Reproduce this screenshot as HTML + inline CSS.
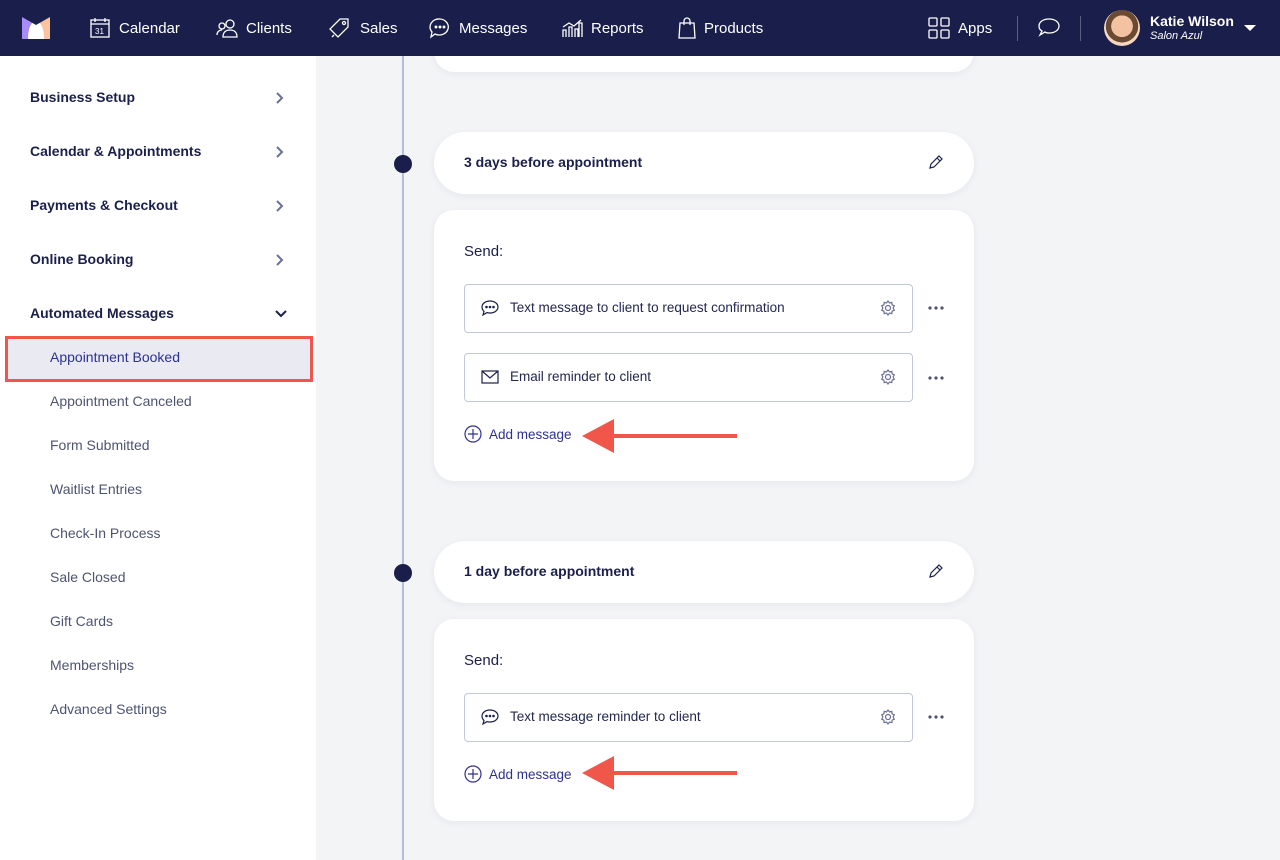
<!DOCTYPE html>
<html><head><meta charset="utf-8"><style>
*{box-sizing:border-box;margin:0;padding:0}
body{width:1280px;height:860px;overflow:hidden;font-family:"Liberation Sans",sans-serif;background:#f3f4f6;position:relative;color:#1b1f4b}
.top{position:absolute;left:0;top:0;width:1280px;height:56px;background:#1a1e4b;color:#fff;z-index:10}
.nav{position:absolute;top:0;height:56px;display:flex;align-items:center;font-size:15px;color:#fff}
.nav svg{margin-right:8px}
.side{position:absolute;left:0;top:56px;width:316px;height:804px;background:#fff}
.sh{position:absolute;left:30px;font-size:14px;font-weight:bold;color:#1b1f4b}
.chev{position:absolute;left:274px}
.si{position:absolute;left:50px;font-size:14px;color:#4e5470}
.line{position:absolute;left:402px;top:56px;width:2px;height:804px;background:#b2bdd9}
.dot{position:absolute;left:394px;width:18px;height:18px;border-radius:50%;background:#1a1e4b}
.card{position:absolute;left:434px;width:540px;background:#fff;border-radius:20px;box-shadow:0 2px 8px rgba(20,30,80,.06)}
.pill{border-radius:31px;height:62px}
.pill b{position:absolute;left:30px;top:22px;font-size:14px}
.pill svg{position:absolute;right:30px;top:22px}
.send{position:absolute;left:30px;font-size:15px}
.msg{position:absolute;left:30px;width:449px;height:49px;border:1px solid #c3c8d8;border-radius:4px;font-size:13.5px;color:#23284f}
.msg span{position:absolute;left:45px;top:15px}
.msg .ic{position:absolute;left:16px;top:15px}
.msg .gear{position:absolute;right:16px;top:15px}
.dots{position:absolute;left:494px}
.add{position:absolute;left:30px;font-size:13.5px;color:#2e3192;display:flex;align-items:center}
.add svg{margin-right:7px}
</style></head><body>
<div class="top">
<svg style="position:absolute;left:22px;top:17px" width="28" height="22" viewBox="0 0 28 22"><rect x="0" y="0" width="14" height="22" fill="#a78bfa"/><rect x="14" y="0" width="14" height="22" fill="#fcc3a0"/><path d="M6 22 Q6 6 14 4 Q22 6 22 22Z" fill="#fff"/><path d="M0 0 L14 8 L28 0Z" fill="#1a1e4b"/></svg>
<div class="nav" style="left:89px"><svg width="22" height="22" viewBox="0 0 22 22" fill="none" stroke="#fff" stroke-width="1.3"><rect x="2" y="3" width="18" height="17"/><path d="M2 7h18M6 1v4M16 1v4"/><text x="6" y="17" font-size="8" fill="#fff" stroke="none">31</text></svg>Calendar</div>
<div class="nav" style="left:216px"><svg width="22" height="22" viewBox="0 0 22 22" fill="none" stroke="#fff" stroke-width="1.3"><circle cx="14" cy="7" r="4"/><path d="M7 20c0-5 3-7 7-7s7 2 7 7z"/><circle cx="6" cy="9" r="3"/><path d="M1 18c0-3 2-5 5-5"/></svg>Clients</div>
<div class="nav" style="left:328px"><svg width="24" height="22" viewBox="0 0 24 22" fill="none" stroke="#fff" stroke-width="1.3"><path d="M12 2h8v8L10 20 2 12z"/><circle cx="16" cy="6" r="1.5"/><path d="M6 18l-2 2"/></svg>Sales</div>
<div class="nav" style="left:429px"><svg width="22" height="22" viewBox="0 0 22 22" fill="none" stroke="#fff" stroke-width="1.3"><path d="M11 2a9 8 0 1 1-5 15l-4 3 1-5A9 8 0 0 1 11 2z"/><circle cx="7" cy="10" r=".8" fill="#fff"/><circle cx="11" cy="10" r=".8" fill="#fff"/><circle cx="15" cy="10" r=".8" fill="#fff"/></svg>Messages</div>
<div class="nav" style="left:561px"><svg width="22" height="22" viewBox="0 0 22 22" fill="none" stroke="#fff" stroke-width="1.3"><path d="M2 20V13h3v7M8 20V10h3v10M14 20V12h3v8M18 20V6h3v14M2 10l6-4 5 3 7-6"/></svg>Reports</div>
<div class="nav" style="left:678px"><svg width="18" height="22" viewBox="0 0 18 22" fill="none" stroke="#fff" stroke-width="1.3"><path d="M2 6h14l1 15H1z"/><path d="M6 8V4a3 3 0 0 1 6 0v4"/></svg>Products</div>
<div class="nav" style="left:928px"><svg width="22" height="22" viewBox="0 0 22 22" fill="none" stroke="#fff" stroke-width="1.3"><rect x="1" y="1" width="8" height="8" rx="1"/><rect x="13" y="1" width="8" height="8" rx="1"/><rect x="1" y="13" width="8" height="8" rx="1"/><rect x="13" y="13" width="8" height="8" rx="1"/></svg>Apps</div>
<div style="position:absolute;left:1017px;top:16px;width:1px;height:25px;background:#5a5e82"></div>
<svg style="position:absolute;left:1037px;top:17px" width="24" height="22" viewBox="0 0 24 22" fill="none" stroke="#fff" stroke-width="1.3"><path d="M12 2c6 0 10 3 10 7s-4 7-10 7c-2 0-3 0-4-1l-5 3 2-4c-2-1-3-3-3-5 0-4 4-7 10-7z"/></svg>
<div style="position:absolute;left:1080px;top:16px;width:1px;height:25px;background:#5a5e82"></div>
<div style="position:absolute;left:1104px;top:10px;width:36px;height:36px;border-radius:50%;background:radial-gradient(circle at 50% 45%,#f3c2a0 0 40%,#6b4a33 41% 60%,#f6d6c0 61%)"></div>
<div style="position:absolute;left:1150px;top:13px;font-size:14px;font-weight:bold">Katie Wilson</div>
<div style="position:absolute;left:1150px;top:30px;font-size:11px;font-style:italic">Salon Azul</div>
<div style="position:absolute;left:1244px;top:25px;border-left:6px solid transparent;border-right:6px solid transparent;border-top:6px solid #fff"></div>
</div>
<div class="side">
<div class="sh" style="top:33px">Business Setup</div>
<div class="sh" style="top:87px">Calendar &amp; Appointments</div>
<div class="sh" style="top:141px">Payments &amp; Checkout</div>
<div class="sh" style="top:195px">Online Booking</div>
<div class="sh" style="top:249px">Automated Messages</div>
<svg class="chev" style="top:35px" width="12" height="14" viewBox="0 0 12 14" fill="none" stroke="#6b7197" stroke-width="2"><path d="M3 2l5 5-5 5"/></svg>
<svg class="chev" style="top:89px" width="12" height="14" viewBox="0 0 12 14" fill="none" stroke="#6b7197" stroke-width="2"><path d="M3 2l5 5-5 5"/></svg>
<svg class="chev" style="top:143px" width="12" height="14" viewBox="0 0 12 14" fill="none" stroke="#6b7197" stroke-width="2"><path d="M3 2l5 5-5 5"/></svg>
<svg class="chev" style="top:197px" width="12" height="14" viewBox="0 0 12 14" fill="none" stroke="#6b7197" stroke-width="2"><path d="M3 2l5 5-5 5"/></svg>
<svg class="chev" style="top:252px" width="14" height="12" viewBox="0 0 14 12" fill="none" stroke="#1b1f4b" stroke-width="2"><path d="M2 3l5 5 5-5"/></svg>
<div style="position:absolute;left:5px;top:280px;width:308px;height:46px;background:#e9eaf2;border:3px solid #f0574a"></div>
<div class="si" style="top:293px;color:#2e3192">Appointment Booked</div>
<div class="si" style="top:337px">Appointment Canceled</div>
<div class="si" style="top:381px">Form Submitted</div>
<div class="si" style="top:425px">Waitlist Entries</div>
<div class="si" style="top:469px">Check-In Process</div>
<div class="si" style="top:513px">Sale Closed</div>
<div class="si" style="top:557px">Gift Cards</div>
<div class="si" style="top:601px">Memberships</div>
<div class="si" style="top:645px">Advanced Settings</div>
</div>
<div class="line"></div>
<div class="card" style="top:30px;height:42px"></div>
<div class="dot" style="top:155px"></div>
<div class="card pill" style="top:132px"><b>3 days before appointment</b><svg width="16" height="16" viewBox="0 0 16 16" fill="none" stroke="#1b1f4b" stroke-width="1.2"><path d="M11 2l3 3-8 8-4 1 1-4zM9 4l3 3"/></svg></div>
<div class="card" style="top:210px;height:271px">
<div class="send" style="top:33px">Send:</div>
<div class="msg" style="top:74px"><svg class="ic" width="18" height="17" viewBox="0 0 18 17" fill="none" stroke="#1b1f4b" stroke-width="1.2"><path d="M9 1c4.5 0 8 2.7 8 6s-3.5 6-8 6c-1 0-2 0-3-.4L2 15l1-3.5C1.7 10.3 1 8.7 1 7c0-3.3 3.5-6 8-6z"/><circle cx="5.5" cy="7" r=".7" fill="#1b1f4b"/><circle cx="9" cy="7" r=".7" fill="#1b1f4b"/><circle cx="12.5" cy="7" r=".7" fill="#1b1f4b"/></svg><span>Text message to client to request confirmation</span><svg class="gear" width="16" height="16" viewBox="0 0 16 16" fill="none" stroke="#6b7197" stroke-width="1.2"><circle cx="8" cy="8" r="2.5"/><path d="M8 1l1.5 2 2.3-.6.3 2.4 2.2 1-1.2 2.2 1.2 2.2-2.2 1-.3 2.4-2.3-.6L8 15l-1.5-2-2.3.6-.3-2.4-2.2-1L2.9 8 1.7 5.8l2.2-1 .3-2.4 2.3.6z"/></svg></div>
<svg class="dots" style="top:96px" width="16" height="4"><circle cx="2" cy="2" r="1.6" fill="#4e5470"/><circle cx="8" cy="2" r="1.6" fill="#4e5470"/><circle cx="14" cy="2" r="1.6" fill="#4e5470"/></svg>
<div class="msg" style="top:143px"><svg class="ic" width="18" height="16" viewBox="0 0 18 16" fill="none" stroke="#1b1f4b" stroke-width="1.2"><rect x="1" y="2" width="16" height="12"/><path d="M1 2l8 7 8-7"/></svg><span>Email reminder to client</span><svg class="gear" width="16" height="16" viewBox="0 0 16 16" fill="none" stroke="#6b7197" stroke-width="1.2"><circle cx="8" cy="8" r="2.5"/><path d="M8 1l1.5 2 2.3-.6.3 2.4 2.2 1-1.2 2.2 1.2 2.2-2.2 1-.3 2.4-2.3-.6L8 15l-1.5-2-2.3.6-.3-2.4-2.2-1L2.9 8 1.7 5.8l2.2-1 .3-2.4 2.3.6z"/></svg></div>
<svg class="dots" style="top:166px" width="16" height="4"><circle cx="2" cy="2" r="1.6" fill="#4e5470"/><circle cx="8" cy="2" r="1.6" fill="#4e5470"/><circle cx="14" cy="2" r="1.6" fill="#4e5470"/></svg>
<div class="add" style="top:215px"><svg width="18" height="18" viewBox="0 0 18 18" fill="none" stroke="#2e3192" stroke-width="1.2"><circle cx="9" cy="9" r="8"/><path d="M9 4v10M4 9h10"/></svg>Add message</div>
</div>
<svg style="position:absolute;left:582px;top:417px" width="156" height="38" viewBox="0 0 156 38"><path d="M0 19L32 2v34z" fill="#f0574a"/><rect x="28" y="17" width="127" height="4" fill="#f0574a"/></svg>
<div class="dot" style="top:564px"></div>
<div class="card pill" style="top:541px"><b>1 day before appointment</b><svg width="16" height="16" viewBox="0 0 16 16" fill="none" stroke="#1b1f4b" stroke-width="1.2"><path d="M11 2l3 3-8 8-4 1 1-4zM9 4l3 3"/></svg></div>
<div class="card" style="top:619px;height:202px">
<div class="send" style="top:33px">Send:</div>
<div class="msg" style="top:74px"><svg class="ic" width="18" height="17" viewBox="0 0 18 17" fill="none" stroke="#1b1f4b" stroke-width="1.2"><path d="M9 1c4.5 0 8 2.7 8 6s-3.5 6-8 6c-1 0-2 0-3-.4L2 15l1-3.5C1.7 10.3 1 8.7 1 7c0-3.3 3.5-6 8-6z"/><circle cx="5.5" cy="7" r=".7" fill="#1b1f4b"/><circle cx="9" cy="7" r=".7" fill="#1b1f4b"/><circle cx="12.5" cy="7" r=".7" fill="#1b1f4b"/></svg><span>Text message reminder to client</span><svg class="gear" width="16" height="16" viewBox="0 0 16 16" fill="none" stroke="#6b7197" stroke-width="1.2"><circle cx="8" cy="8" r="2.5"/><path d="M8 1l1.5 2 2.3-.6.3 2.4 2.2 1-1.2 2.2 1.2 2.2-2.2 1-.3 2.4-2.3-.6L8 15l-1.5-2-2.3.6-.3-2.4-2.2-1L2.9 8 1.7 5.8l2.2-1 .3-2.4 2.3.6z"/></svg></div>
<svg class="dots" style="top:96px" width="16" height="4"><circle cx="2" cy="2" r="1.6" fill="#4e5470"/><circle cx="8" cy="2" r="1.6" fill="#4e5470"/><circle cx="14" cy="2" r="1.6" fill="#4e5470"/></svg>
<div class="add" style="top:146px"><svg width="18" height="18" viewBox="0 0 18 18" fill="none" stroke="#2e3192" stroke-width="1.2"><circle cx="9" cy="9" r="8"/><path d="M9 4v10M4 9h10"/></svg>Add message</div>
</div>
<svg style="position:absolute;left:582px;top:754px" width="156" height="38" viewBox="0 0 156 38"><path d="M0 19L32 2v34z" fill="#f0574a"/><rect x="28" y="17" width="127" height="4" fill="#f0574a"/></svg>
</body></html>
